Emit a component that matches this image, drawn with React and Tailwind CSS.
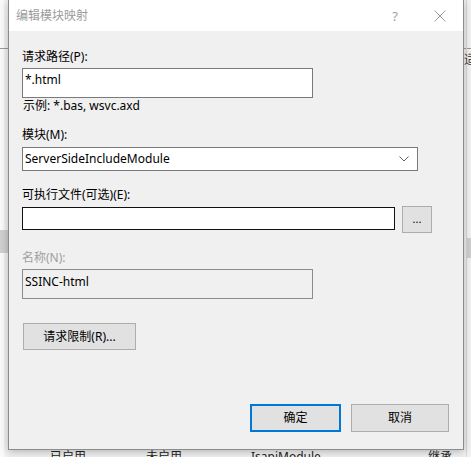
export default function App() {
  const font = { fontFamily: '"Noto Sans", "Noto Sans CJK SC", sans-serif' };

  return (
    <div
      className="relative w-[471px] h-[457px] overflow-hidden bg-[#f2f2f2] text-[12px] leading-[16px] text-black"
      style={font}
    >
      {/* window behind the dialog */}
      <div className="absolute left-0 top-0 w-[4px] h-full bg-[#fafafa]" />
      <div className="absolute left-0 top-[48px] w-full h-px bg-[#9a9a9a]" />
      <div className="absolute left-0 top-[230px] w-[8px] h-[23px] bg-[#cfcfcf]" />
      <div className="absolute right-0 top-[238px] w-[5px] h-[20px] bg-[#cfcfcf]" />
      <div className="absolute left-[466px] top-[0px] w-px h-full bg-[#d9d9d9]" />
      <div className="absolute left-[464px] top-[52px] text-[12px] text-[#333]">适</div>
      <div className="absolute left-0 top-[449px] w-full h-[16px] text-[#222]">
        <span className="absolute left-[50px]">已启用</span>
        <span className="absolute left-[146px]">未启用</span>
        <span className="absolute left-[251px]">IsapiModule</span>
        <span className="absolute left-[428px]">继承</span>
      </div>

      {/* dialog */}
      <div className="relative z-10 ml-[8px] w-[456px] h-[450px] flex flex-col bg-[#f0f0f0] border-x border-b border-[#8c8c8c] shadow-[0_2px_8px_rgba(0,0,0,0.25)]">
        <div className="h-[31px] shrink-0 bg-white flex items-center pl-[7px]">
          <span className="text-[#9b9b9b]">编辑模块映射</span>
          <span className="ml-auto mr-[36px] text-[#a0a0a0] text-[13px]">?</span>
          <svg width="12" height="12" viewBox="0 0 12 12" className="mr-[17px]">
            <path d="M0.5 0.5L11.5 11.5M11.5 0.5L0.5 11.5" stroke="#9b9b9b" strokeWidth="1" />
          </svg>
        </div>

        <div className="flex-1 flex flex-col pl-[13px] pr-[14px]">
          <div className="mt-[18px] h-[16px]">请求路径(P):</div>
          <div className="mt-[3px] w-[291px] h-[30px] bg-white border border-[#7a7a7a] pl-[2px] pt-[3px]">
            *.html
          </div>
          <div className="h-[16px] pl-[1px]">示例: *.bas, wsvc.axd</div>

          <div className="mt-[13px] h-[16px]">模块(M):</div>
          <div className="mt-[4px] w-[396px] h-[24px] bg-white border border-[#7a7a7a] flex items-center pl-[2px] pr-[8px]">
            <span>ServerSideIncludeModule</span>
            <svg width="10" height="6" viewBox="0 0 10 6" className="ml-auto">
              <path d="M0.5 0.5L5 5L9.5 0.5" fill="none" stroke="#606060" strokeWidth="1" />
            </svg>
          </div>

          <div className="mt-[16px] h-[16px]">可执行文件(可选)(E):</div>
          <div className="mt-[3px] h-[27px] flex items-start">
            <div className="mt-px w-[373px] h-[23px] bg-white border border-[#111]" />
            <button className="ml-[7px] w-[30px] h-[27px] bg-[#e1e1e1] border border-[#adadad] flex items-center justify-center text-[11px] leading-none pb-[2px]">
              ...
            </button>
          </div>

          <div className="mt-[17px] h-[16px] text-[#a0a0a0]">名称(N):</div>
          <div className="mt-[3px] w-[291px] h-[30px] border border-[#8c8c8c] pl-[2px] pt-[4px]">
            SSINC-html
          </div>

          <button className="mt-[24px] ml-px w-[113px] h-[27px] bg-[#e1e1e1] border border-[#adadad] flex items-center justify-center">
            请求限制(R)...
          </button>

          <div className="mt-[54px] flex justify-end gap-[10px]">
            <button className="w-[91px] h-[28px] bg-[#e1e1e1] border-2 border-[#0078d7] flex items-center justify-center">
              确定
            </button>
            <button className="w-[98px] h-[28px] bg-[#e1e1e1] border border-[#adadad] flex items-center justify-center">
              取消
            </button>
          </div>
        </div>
      </div>
    </div>
  );
}
